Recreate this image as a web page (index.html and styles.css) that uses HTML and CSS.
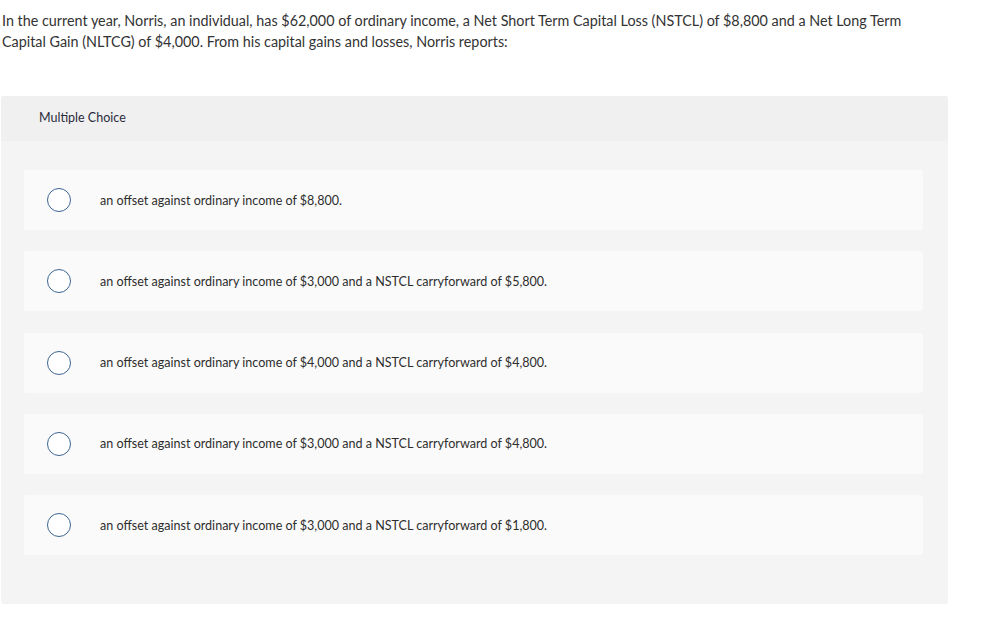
FILE: index.html
```html
<!DOCTYPE html>
<html>
<head>
<meta charset="utf-8">
<link rel="stylesheet" href="styles.css">
</head>
<body>
<div class="page">
  <p class="question">In the current year, Norris, an individual, has $62,000 of ordinary income, a Net Short Term Capital Loss (NSTCL) of $8,800 and a Net Long Term Capital Gain (NLTCG) of $4,000. From his capital gains and losses, Norris reports:</p>
  <div class="panel">
    <div class="panel-head">Multiple Choice</div>
    <div class="panel-body">
      <div class="option"><span class="radio"></span><span class="label">an offset against ordinary income of $8,800.</span></div>
      <div class="option"><span class="radio"></span><span class="label">an offset against ordinary income of $3,000 and a NSTCL carryforward of $5,800.</span></div>
      <div class="option"><span class="radio"></span><span class="label">an offset against ordinary income of $4,000 and a NSTCL carryforward of $4,800.</span></div>
      <div class="option"><span class="radio"></span><span class="label">an offset against ordinary income of $3,000 and a NSTCL carryforward of $4,800.</span></div>
      <div class="option"><span class="radio"></span><span class="label">an offset against ordinary income of $3,000 and a NSTCL carryforward of $1,800.</span></div>
    </div>
  </div>
</div>
</body>
</html>
```
FILE: styles.css
```css
html, body {
  margin: 0;
  padding: 0;
  background: #ffffff;
}
.page {
  width: 997px;
  font-family: Lato, "Liberation Sans", sans-serif;
}
.question {
  margin: 0;
  padding: 10px 0 0 2px;
  width: 930px;
  font-size: 14.35px;
  line-height: 21px;
  color: #333333;
}
.panel {
  margin: 44px 0 0 1px;
  width: 947px;
  border-radius: 3px;
  background: #f4f4f4;
  overflow: hidden;
}
.panel-head {
  height: 45px;
  box-sizing: border-box;
  padding: 14px 0 0 38px;
  background: #f0f0f0;
  font-size: 12.5px;
  line-height: 16px;
  color: #2b2b3b;
}
.panel-body {
  padding: 29px 25px 49px 23px;
  display: flex;
  flex-direction: column;
  gap: 21.3px;
}
.option {
  height: 60px;
  background: #fafafa;
  border-radius: 3px;
  display: flex;
  align-items: center;
  padding-left: 23px;
}
.radio {
  width: 22px;
  height: 22px;
  border: 1.5px solid #3b6592;
  border-radius: 50%;
  background: #ffffff;
  flex: none;
}
.label {
  margin-left: 29px;
  font-size: 12.55px;
  color: #2d2d2d;
}
```
